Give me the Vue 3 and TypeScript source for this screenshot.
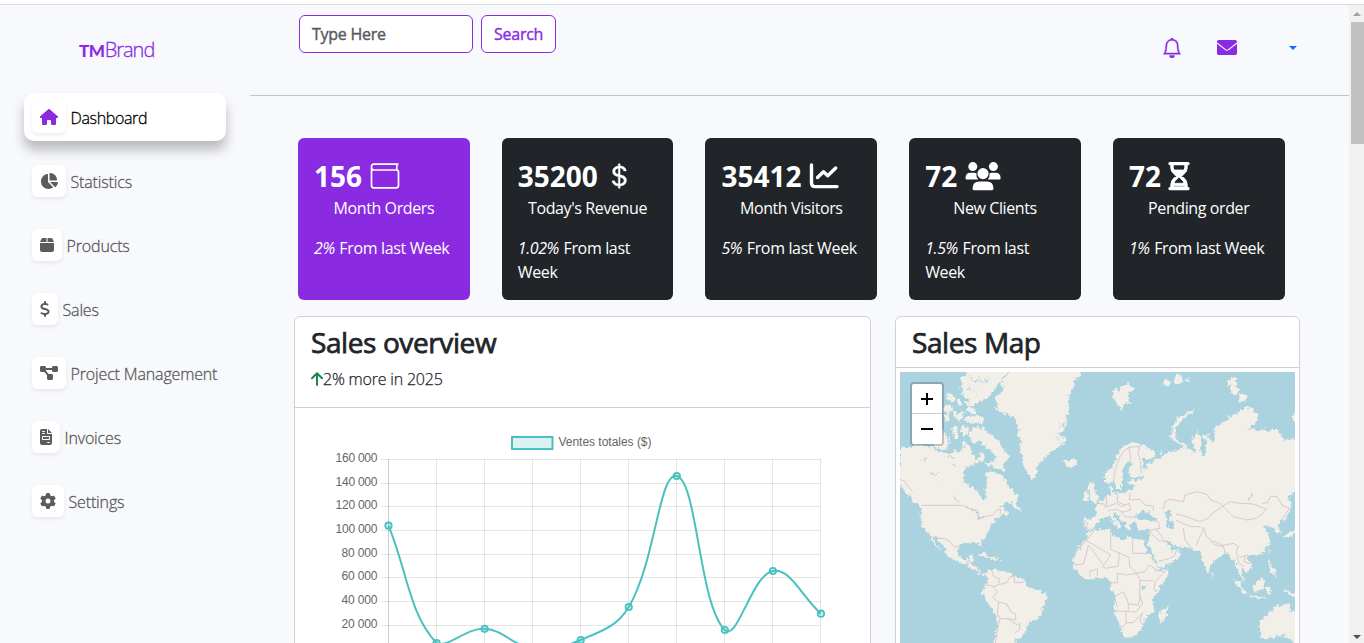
<script setup lang="ts">
interface NavItem { label: string; width: number; box: string; path: string; active?: boolean }
interface Stat { value: string; icon: string; label: string; pct: string }

const nav: NavItem[] = [
  { label: 'Dashboard', width: 18, box: '0 0 576 512', active: true, path: 'M575.8 255.5c0 18-15 32.1-32 32.1l-32 0 .7 160.2c0 2.7-.2 5.4-.5 8.1l0 16.2c0 22.1-17.9 40-40 40l-16 0c-1.1 0-2.2 0-3.3-.1c-1.4 .1-2.8 .1-4.2 .1L416 512l-24 0c-22.1 0-40-17.9-40-40l0-24 0-64c0-17.7-14.3-32-32-32l-64 0c-17.7 0-32 14.3-32 32l0 64 0 24c0 22.1-17.9 40-40 40l-24 0-31.9 0c-1.5 0-3-.1-4.5-.2c-1.2 .1-2.4 .2-3.6 .2l-16 0c-22.1 0-40-17.9-40-40l0-112c0-.9 0-1.9 .1-2.8l0-69.7-32 0c-18 0-32-14-32-32.1c0-9 3-17 10-24L266.4 8c7-7 15-8 22-8s15 2 21 7L564.8 231.5c8 7 12 15 11 24z' },
  { label: 'Statistics', width: 18, box: '0 0 576 512', path: 'M304 240l0-223.4c0-9 7-16.6 16-16.6C443.7 0 544 100.3 544 224c0 9-7.6 16-16.6 16L304 240zM32 272C32 150.7 122.1 50.3 239 34.3c9.2-1.3 17 6.1 17 15.4L256 288 412.5 444.5c6.7 6.7 6.2 17.7-1.5 23.1C371.8 495.6 323.8 512 272 512C139.5 512 32 404.6 32 272zm526.4 16c9.3 0 16.6 7.8 15.4 17c-7.7 55.9-34.6 105.6-73.9 142.3c-6 5.6-15.4 5.2-21.2-.7L320 288l238.4 0z' },
  { label: 'Products', width: 14, box: '0 0 448 512', path: 'M50.7 58.5L0 160l208 0 0-128L93.7 32C75.5 32 58.9 42.3 50.7 58.5zM240 160l208 0L397.3 58.5C389.1 42.3 372.5 32 354.3 32L240 32l0 128zm208 32L0 192 0 416c0 35.3 28.7 64 64 64l320 0c35.3 0 64-28.7 64-64l0-224z' },
  { label: 'Sales', width: 10, box: '0 0 320 512', path: 'M160 0c17.7 0 32 14.3 32 32l0 35.7c1.6 .2 3.1 .4 4.7 .7c.4 .1 .7 .1 1.1 .2l48 8.8c17.4 3.2 28.9 19.9 25.7 37.2s-19.9 28.9-37.2 25.7l-47.5-8.7c-31.3-4.6-58.9-1.5-78.3 6.2s-27.2 18.3-29 28.1c-2 10.7-.5 16.7 1.2 20.4c1.8 3.9 5.5 8.3 12.8 13.2c16.3 10.7 41.3 17.7 73.7 26.3l2.9 .8c28.6 7.6 63.6 16.8 89.6 33.8c14.2 9.3 27.6 21.9 35.9 39.5c8.5 17.9 10.3 37.9 6.4 59.2c-6.9 38-33.1 63.4-65.6 76.7c-13.7 5.6-28.6 9.2-44.4 11l0 33.4c0 17.7-14.3 32-32 32s-32-14.3-32-32l0-34.9c-.4-.1-.9-.1-1.3-.2l-.2 0c-24.4-3.8-64.5-14.3-91.5-26.3c-16.1-7.2-23.4-26.1-16.2-42.2s26.1-23.4 42.2-16.2c20.9 9.3 55.3 18.5 75.2 21.6c31.9 4.7 58.2 2 76-5.3c16.9-6.9 24.6-16.9 26.8-28.9c1.9-10.6 .4-16.7-1.3-20.4c-1.9-4-5.6-8.4-13-13.3c-16.4-10.7-41.5-17.7-74-26.3l-2.8-.7C119.4 279.3 84.4 270 58.4 253c-14.2-9.3-27.5-22-35.8-39.6c-8.4-17.9-10.1-37.9-6.1-59.2C23.7 116 52.3 91.2 84.8 78.3c13.3-5.3 27.9-8.9 43.2-11L128 32c0-17.7 14.3-32 32-32z' },
  { label: 'Project Management', width: 18, box: '0 0 576 512', path: 'M0 80C0 53.5 21.5 32 48 32l96 0c26.5 0 48 21.5 48 48l0 16 192 0 0-16c0-26.5 21.5-48 48-48l96 0c26.5 0 48 21.5 48 48l0 96c0 26.5-21.5 48-48 48l-96 0c-26.5 0-48-21.5-48-48l0-16-192 0 0 16c0 1.7-.1 3.4-.3 5L272 288l96 0c26.5 0 48 21.5 48 48l0 96c0 26.5-21.5 48-48 48l-96 0c-26.5 0-48-21.5-48-48l0-96c0-1.7 .1-3.4 .3-5L144 224l-96 0c-26.5 0-48-21.5-48-48L0 80z' },
  { label: 'Invoices', width: 12, box: '0 0 384 512', path: 'M64 0C28.7 0 0 28.7 0 64L0 448c0 35.3 28.7 64 64 64l256 0c35.3 0 64-28.7 64-64l0-288-128 0c-17.7 0-32-14.3-32-32L224 0 64 0zM256 0l0 128 128 0L256 0zM80 64l64 0c8.8 0 16 7.2 16 16s-7.2 16-16 16L80 96c-8.8 0-16-7.2-16-16s7.2-16 16-16zm0 64l64 0c8.8 0 16 7.2 16 16s-7.2 16-16 16l-64 0c-8.8 0-16-7.2-16-16s7.2-16 16-16zm16 96l192 0c17.7 0 32 14.3 32 32l0 64c0 17.7-14.3 32-32 32L96 352c-17.7 0-32-14.3-32-32l0-64c0-17.7 14.3-32 32-32zm0 32l0 64 192 0 0-64L96 256zM240 416l64 0c8.8 0 16 7.2 16 16s-7.2 16-16 16l-64 0c-8.8 0-16-7.2-16-16s7.2-16 16-16z' },
  { label: 'Settings', width: 16, box: '0 0 512 512', path: 'M495.9 166.6c3.2 8.7 .5 18.4-6.4 24.6l-43.3 39.4c1.1 8.3 1.7 16.8 1.7 25.4s-.6 17.1-1.7 25.4l43.3 39.4c6.9 6.2 9.6 15.9 6.4 24.6c-4.4 11.9-9.7 23.3-15.8 34.3l-4.7 8.1c-6.6 11-14 21.4-22.1 31.2c-5.9 7.2-15.7 9.6-24.5 6.8l-55.7-17.7c-13.4 10.3-28.2 18.9-44 25.4l-12.5 57.1c-2 9.1-9 16.3-18.2 17.8c-13.8 2.3-28 3.5-42.5 3.5s-28.7-1.2-42.5-3.5c-9.2-1.5-16.2-8.7-18.2-17.8l-12.5-57.1c-15.8-6.5-30.6-15.1-44-25.4L83.1 425.9c-8.8 2.8-18.6 .3-24.5-6.8c-8.1-9.8-15.5-20.2-22.1-31.2l-4.7-8.1c-6.1-11-11.4-22.4-15.8-34.3c-3.2-8.7-.5-18.4 6.4-24.6l43.3-39.4C64.6 273.1 64 264.6 64 256s.6-17.1 1.7-25.4L22.4 191.2c-6.9-6.2-9.6-15.9-6.4-24.6c4.4-11.9 9.7-23.3 15.8-34.3l4.7-8.1c6.6-11 14-21.4 22.1-31.2c5.9-7.2 15.7-9.6 24.5-6.8l55.7 17.7c13.4-10.3 28.2-18.9 44-25.4l12.5-57.1c2-9.1 9-16.3 18.2-17.8C227.3 1.2 241.5 0 256 0s28.7 1.2 42.5 3.5c9.2 1.5 16.2 8.7 18.2 17.8l12.5 57.1c15.8 6.5 30.6 15.1 44 25.4l55.7-17.7c8.8-2.8 18.6-.3 24.5 6.8c8.1 9.8 15.5 20.2 22.1 31.2l4.7 8.1c6.1 11 11.4 22.4 15.8 34.3zM256 336a80 80 0 1 0 0-160 80 80 0 1 0 0 160z' },
]

const stats: Stat[] = [
  { value: '156', icon: 'wallet', label: 'Month Orders', pct: '2%' },
  { value: '35200', icon: 'dollar', label: "Today's Revenue", pct: '1.02%' },
  { value: '35412', icon: 'chart', label: 'Month Visitors', pct: '5%' },
  { value: '72', icon: 'users', label: 'New Clients', pct: '1.5%' },
  { value: '72', icon: 'hourglass', label: 'Pending order', pct: '1%' },
]

// Chart geometry, in the svg's own units
const left = 93.5
const top = 51.5
const colW = 48.05
const rowH = 23.65
const bottom = top + 8 * rowH
const ticks = ['160 000', '140 000', '120 000', '100 000', '80 000', '60 000', '40 000', '20 000']
const ys = [117.7, 235, 220.8, 240.5, 232, 199, 68, 222, 163, 205.7]
const points = ys.map((y, i) => ({ x: left + i * colW, y }))

function splinePath(tension: number): string {
  const cap = (v: number) => Math.max(top, Math.min(bottom, v))
  const ctl = points.map((p, i) => {
    const a = points[i - 1] ?? p
    const b = points[i + 1] ?? p
    const d1 = Math.hypot(p.x - a.x, p.y - a.y)
    const d2 = Math.hypot(b.x - p.x, b.y - p.y)
    const f1 = (tension * d1) / (d1 + d2)
    const f2 = (tension * d2) / (d1 + d2)
    return {
      px: p.x - f1 * (b.x - a.x), py: cap(p.y - f1 * (b.y - a.y)),
      nx: p.x + f2 * (b.x - a.x), ny: cap(p.y + f2 * (b.y - a.y)),
    }
  })
  return points.map((p, i) => i === 0
    ? `M${p.x} ${p.y}`
    : `C${ctl[i - 1].nx} ${ctl[i - 1].ny} ${ctl[i].px} ${ctl[i].py} ${p.x} ${p.y}`).join('')
}
const curve = splinePath(0.4)

// Land outlines: Americas first, then the eastern half in its own offset group
const westLand = [
  '30,415 40,412 52,416 62,410 80,404 100,408 120,408 135,418 150,425 165,428 180,430 195,420 215,427 225,412 235,402 242,415 245,432 252,440 268,450 262,460 240,468 228,475 218,490 222,512 238,528 258,540 270,548 275,568 282,572 288,560 285,545 292,530 290,505 288,490 295,482 312,485 320,495 332,490 345,508 350,520 360,535 375,545 384,562 375,572 360,578 342,580 325,592 340,590 340,600 352,604 360,610 345,616 330,616 322,628 308,640 300,650 298,662 290,675 278,688 273,695 278,716 272,712 266,697 250,698 235,700 220,698 208,705 203,718 205,735 215,747 232,748 238,738 250,735 248,750 245,762 262,768 264,778 270,790 280,795 290,793 290,799 280,798 270,792 255,780 240,770 225,763 210,758 190,748 172,738 165,718 150,700 138,683 128,678 135,695 148,712 156,726 145,718 133,702 125,688 118,675 108,665 98,650 92,635 92,610 95,595 85,585 72,578 65,565 50,552 40,540 30,525',
  '288,796 300,780 312,776 325,784 345,784 362,788 372,797 385,802 400,806 408,818 408,828 425,835 445,840 465,850 473,860 465,875 458,890 455,910 445,926 425,932 412,945 408,960 395,980 385,988 374,985 380,1010 310,1010 318,975 322,945 322,920 310,903 295,885 285,865 275,850 280,835 290,820 294,805',
  '312,265 325,255 345,235 335,228 328,222 338,210 352,198 362,180 574,180 568,200 548,215 555,228 540,245 540,265 533,285 540,300 530,320 530,345 515,365 500,375 522,380 528,395 515,405 500,415 485,425 465,445 450,458 440,475 438,495 432,507 420,500 408,485 400,465 395,445 392,425 388,400 398,395 385,380 385,355 380,335 372,320 350,312 330,308 315,295 325,285',
  '515,452 530,448 545,447 560,450 562,460 550,470 537,474 525,468 530,460',
  '212,205 225,192 235,180 355,180 340,205 325,220 315,235 305,255 290,268 270,275 250,285 235,288 222,278 240,270 225,260 212,250 220,240 208,230 220,220',
  '226,320 240,316 260,320 280,322 281,338 260,338 240,338 226,332', '232,290 250,296 262,308 258,318 242,310 228,305',
  '172,250 185,252 196,268 185,278 174,266', '165,285 180,285 190,300 178,310 160,300', '200,265 210,268 215,285 203,282', '190,305 200,312 218,302 222,325 208,335 195,325', '161,315 175,312 178,330 165,335',
  '95,380 110,370 125,372 145,358 158,362 175,380 180,400 172,415 155,418 135,412 120,400 100,396',
  '185,352 200,350 208,368 205,388 190,380', '218,345 235,350 236,365 220,385 212,365', '212,395 225,390 230,405 218,410',
  '238,385 240,362 252,352 270,352 290,358 300,372 318,385 330,402 340,420 358,440 350,455 340,462 348,485 330,480 315,470 300,468 288,458 310,455 318,440 305,425 290,412 278,405 266,390 256,402 245,395',
  '268,430 282,430 285,445 275,460 265,448', '365,575 378,568 380,585 394,598 384,600 370,592 372,580', '258,730 280,728 298,738 304,746 284,740 268,735', '303,742 325,742 326,749 305,750', '330,747 340,747 340,751 330,751',
  '580,550 592,542 597,555 592,570 580,572', '598,520 610,514 612,535 622,550 628,570 605,577 600,560 604,545 596,535',
]
const eastLand = [
  '-15,625 -18,640 -15,655 -5,660 5,655 15,650 20,640 32,630 45,622 55,618 65,630 78,645 88,655 92,645 80,630 68,615 76,608 88,620 100,635 108,650 115,662 125,655 120,640 130,635 138,632 135,645 142,655 160,662 175,658 180,672 175,690 167,698 178,710 190,735 200,755 210,773 230,765 250,755 265,745 276,730 262,718 245,724 240,708 226,695 235,690 250,705 270,712 290,715 305,715 320,722 330,725 338,750 345,775 353,793 362,780 360,765 385,745 395,735 410,730 420,745 435,755 442,770 445,790 455,805 463,818 460,800 455,785 450,775 462,775 470,788 480,780 487,770 480,755 470,742 480,735 500,738 515,730 530,715 540,690 535,670 522,655 530,645 545,650 552,655 562,672 573,665 562,645 575,632 590,620 600,600 605,580 595,560 620,540 620,388 600,390 585,388 570,370 550,357 535,362 520,358 500,360 475,355 500,335 505,315 490,300 470,288 455,300 435,315 410,328 390,345 368,355 375,375 372,400 360,385 350,374 338,378 348,395 350,425 340,435 332,425 335,395 325,365 312,375 307,400 318,425 300,418 280,410 260,422 240,425 220,435 210,445 198,448 192,455 172,460 168,480 160,470 158,445 175,448 190,445 198,430 180,415 155,405 140,396 120,400 105,405 90,418 80,440 65,470 45,490 45,515 60,522 72,515 80,535 92,540 98,520 95,500 100,475 118,452 128,460 115,480 115,500 135,503 155,497 150,508 130,510 112,520 128,525 128,537 110,540 108,548 85,550 65,550 68,535 62,525 55,535 60,552 40,568 30,575 15,590 20,605 15,622 -5,625',
  '-5,665 20,658 60,658 65,678 85,685 103,692 108,680 130,685 165,690 160,700 175,725 188,750 203,770 208,780 240,778 232,800 215,825 195,850 188,870 192,895 190,905 170,920 165,935 158,950 145,970 125,982 105,985 95,965 85,935 72,905 78,875 75,855 60,835 65,815 50,803 30,803 -10,808 -25,800 -48,775 -50,765 -45,735 -30,705 -10,690',
  '-1,516 8,520 14,540 27,565 20,575 0,577', '208,930 206,915 214,902 228,892 235,882 233,905 220,937 210,940', '507,930 530,915 550,900 560,885 575,892 580,880 602,880 598,898 620,905 620,1010 600,985 580,975 545,985 515,985 510,960',
  '430,805 442,812 460,832 472,850 460,852 445,832', '487,825 500,820 515,805 525,810 520,838 500,845 490,838', '470,855 490,858 515,860 535,866 515,866 480,860', '528,832 548,828 535,838 548,848 530,850', '535,750 542,752 545,770 558,780 555,800 545,795 540,775', '580,835 600,845 620,850 620,865 600,855 580,845', '575,683 595,668 620,660 620,670 600,678 580,686', '533,720 539,718 536,732', '362,785 370,795 365,803',
  '68,240 80,235 90,245 95,230 115,222 137,235 125,245 112,250 123,285 108,275 95,302 85,285 70,265',
  '240,380 248,350 260,325 290,308 314,298 310,308 285,322 268,340 256,358 258,385 285,402 292,416 268,402 248,392', '415,215 425,200 437,210 440,230 448,245 438,256 424,245', '450,248 468,255 470,272 448,275', '216,215 235,210 240,225 222,228', '255,200 270,190 280,210 268,225 250,218', '285,210 299,205 296,218', '205,425 215,425 213,435', '606,318 620,310 620,338 610,332',
]
const water = [
  '150,608 158,602 168,608 180,600 178,612 192,622 198,628 190,634 165,628 145,632 138,625', '225,608 240,600 247,606 235,622 248,640 252,658 235,655 228,635', '155,830 168,828 165,838 156,840', '468,570 480,560 490,542 488,556 476,568', '148,508 156,500 162,505 154,512',
]
const westBorders = [
  '95,586 215,586 235,592', '262,628 290,618 308,616 322,600 332,598 330,614', '120,680 140,684 165,686 180,694 190,708 205,712', '30,508 45,515 55,530 68,545', '228,762 236,750 248,766 262,770', '305,780 312,800 328,806 326,824 310,830 298,825 282,826', '326,824 350,818 360,800 372,800 374,818 402,816', '310,830 322,846 308,862 326,876 350,882 362,905 376,912 378,930 352,926 330,926 322,910 326,876', '330,926 322,960 316,1000', '352,926 382,945 390,940 388,960 374,968', '585,630 592,640 588,658', '235,594 258,603 268,624',
]
const eastBorders = [
  '70,520 75,480 90,440 105,420 118,412 122,448', '118,412 138,410 150,410 144,430 152,455 154,490', '48,555 50,590 80,580 95,590 118,580 122,600 100,606 78,598 52,602', '20,580 42,582 48,595', '82,552 82,575 105,585', '120,548 118,570 150,568 165,585 190,588 190,602', '95,605 105,620 132,622 140,610', '220,598 225,575 240,568 280,575 285,555 320,545 350,552 362,570 385,578 398,588 365,612 355,625 330,635 310,628 285,618 258,612', '258,630 278,640 302,650 330,650 340,660 325,690 318,708', '398,588 420,575 450,580 490,582 530,598 500,625 470,630 430,620 398,588', '515,580 532,578 542,558 562,560 575,585 598,595 585,615 572,635', '340,650 350,680 365,692 400,706 430,700 445,708 438,730 450,742 475,735', '365,695 372,704 400,710', '400,708 405,728 415,730', '280,655 285,690 305,715', '172,690 185,660 210,655 205,635 190,632', '185,672 205,690 225,695', '200,660 215,680 228,698', '205,754 240,745 255,735 258,722', '128,686 128,730 174,730', '62,662 62,718 118,742', '88,728 84,768 48,775 38,770 62,735 -10,692', '-45,730 -10,690 14,660', '-48,765 -20,762 -12,735 -5,705 38,762', '118,742 118,768 140,790 165,785 178,765 200,780', '0,800 0,782 22,778 22,798', '62,818 82,818 82,790 108,795 140,790 152,812 190,812', '195,782 225,785 195,815 192,840', '78,858 100,845 112,870 115,882 145,885 152,855', '72,902 138,906 158,880 148,855 150,830 150,810', '115,882 115,902', '108,908 108,940 95,955', '108,938 130,938 158,908', '158,908 150,932 158,945', '440,740 448,760 462,770', '465,735 462,755 480,762',
]
</script>

<template>
  <div class="page">
    <aside class="sidebar">
      <div class="brand"><b>TM</b><span>Brand</span></div>
      <nav>
        <a v-for="n in nav" :key="n.label" class="nav-item" :class="{ active: n.active }">
          <span class="nav-icon"><svg :width="n.width" height="16" :viewBox="n.box"><path :d="n.path" /></svg></span>
          <span class="nav-label">{{ n.label }}</span>
        </a>
      </nav>
    </aside>

    <main>
      <header>
        <form class="search">
          <div class="input">Type Here</div>
          <button type="button">Search</button>
        </form>
        <div class="actions">
          <svg class="bell" width="20" height="20" viewBox="0 0 16 16"><path d="M8 16a2 2 0 0 0 2-2H6a2 2 0 0 0 2 2M8 1.918l-.797.161A4 4 0 0 0 4 6c0 .628-.134 2.197-.459 3.742-.16.767-.376 1.566-.663 2.258h10.244c-.287-.692-.502-1.49-.663-2.258C12.134 8.197 12 6.628 12 6a4 4 0 0 0-3.203-3.92zM14.22 12c.223.447.481.801.78 1H1c.299-.199.557-.553.78-1C2.68 10.2 3 6.88 3 6c0-2.42 1.72-4.44 4.005-4.901a1 1 0 1 1 1.99 0A5 5 0 0 1 13 6c0 .88.32 4.2 1.22 6" /></svg>
          <svg class="mail" width="20" height="15" viewBox="0 0 20 15"><rect width="20" height="15" rx="1.7" /><path d="M0 2.9 8.4 9.6Q10 10.9 11.6 9.6L20 2.9" fill="none" stroke="#f8f9fc" stroke-width="1.2" /></svg>
          <svg class="caret" width="8" height="4" viewBox="0 0 8 4"><path d="M0 0h8L4 4z" /></svg>
        </div>
      </header>

      <section class="stats">
        <article v-for="(s, i) in stats" :key="s.label" class="stat" :class="{ primary: i === 0 }">
          <div class="figure">
            <strong>{{ s.value }}</strong>
            <svg v-if="s.icon === 'wallet'" class="ic" width="30" height="28" viewBox="0 0 30 28" fill="none" stroke="#fff" stroke-width="1.7"><path d="M28.5 2.2H3.8Q1.5 2.2 1.5 4.5v19Q1.5 25.8 3.8 25.8h22.4q2.3 0 2.3-2.3V10Q28.500 8 26.300 8H4Q1.500 8 1.500 5.400M26.800 2.500V8" /></svg>
            <svg v-else-if="s.icon === 'dollar'" class="ic" width="28" height="28" viewBox="0 0 16 16" fill="#fff" stroke="#fff" stroke-width=".2"><path d="M4 10.781c.148 1.667 1.513 2.85 3.591 3.003V15h1.043v-1.216c2.27-.179 3.678-1.438 3.678-3.3 0-1.59-.947-2.51-2.956-3.028l-.722-.187V3.467c1.122.11 1.879.714 2.07 1.616h1.47c-.166-1.6-1.54-2.748-3.54-2.875V1H7.591v1.233c-1.939.23-3.27 1.472-3.27 3.156 0 1.454.966 2.483 2.661 2.917l.61.162v4.031c-1.149-.17-1.94-.8-2.131-1.718zm3.391-3.836c-1.043-.263-1.6-.825-1.6-1.616 0-.944.704-1.641 1.8-1.828v3.495l-.2-.05zm1.591 1.872c1.287.323 1.852.859 1.852 1.769 0 1.097-.826 1.828-2.2 1.939V8.73z" /></svg>
            <svg v-else-if="s.icon === 'chart'" class="ic" width="30" height="28" viewBox="0 0 30 28" fill="none" stroke="#fff" stroke-width="3.4" stroke-linecap="round" stroke-linejoin="round"><path d="M2.5 3v18q0 3.6 3.6 3.6H28M8.5 15.5l6-5.8 4.2 4L26.7 6" /></svg>
            <svg v-else-if="s.icon === 'users'" class="ic" width="36" height="30" viewBox="0 0 36 30" fill="#fff"><circle cx="7.8" cy="5.6" r="4.5" /><circle cx="28.4" cy="5.6" r="4.5" /><circle cx="18" cy="12.6" r="5.6" /><path d="M5.4 11.8h4.2q1 0 1.8.4-.5 3.6 1.9 6.3H1.6Q.5 18.5.5 17.3q0-5.5 4.9-5.5M26.4 11.8h4.2q5 0 5 5.5 0 1.2-1.2 1.2H22.7q2.4-2.7 1.9-6.3.8-.4 1.8-.4M14.3 20.5h7.4q6.8 0 6.8 7.1 0 1.6-1.5 1.6H9q-1.5 0-1.5-1.6 0-7.1 6.8-7.1" /></svg>
            <svg v-else class="ic" width="22" height="30" viewBox="0 0 22 30" fill="none" stroke="#fff" stroke-linejoin="round" stroke-linecap="round"><path d="M2 2.6h18M2 27.6h18" stroke-width="3.4" /><path d="M4 3v3.5q0 2.6 2 4.5l4 4-4 4q-2 2-2 4.5V27h14v-3.5q0-2.5-2-4.5l-4-4 4-4q2-1.900 2-4.500V3" stroke-width="3.4" /><path d="M5 9h12l-6 6zM5.5 24.5h11V21l-1.8 1.300H7.300L5.500 21z" fill="#fff" stroke-width=".8" /></svg>
          </div>
          <div class="stat-label">{{ s.label }}</div>
          <p><em>{{ s.pct }}</em> From last Week</p>
        </article>
      </section>

      <section class="panels">
        <article class="panel sales">
          <div class="panel-head tall">
            <h3>Sales overview</h3>
            <p><svg width="12" height="14" viewBox="0 0 12 14" fill="none" stroke="#198754" stroke-width="2" stroke-linecap="round" stroke-linejoin="round"><path d="M6 13V1.500M1 6.300 6 1.200l5 5.100" /></svg>2% more in 2025</p>
          </div>
          <svg class="chart" width="575" height="235" viewBox="0 0 575 235">
            <rect x="217" y="29" width="40.5" height="12" fill="#dbf2f2" stroke="#4bc0c0" stroke-width="2" />
            <text x="263.5" y="38" textLength="93" lengthAdjust="spacing">Ventes totales ($)</text>
            <g v-for="(t, i) in ticks" :key="t">
              <path :d="`M86 ${Math.floor(top + i * rowH) + 0.5}H526`" class="grid" />
              <text x="82.5" :y="54 + i * rowH" text-anchor="end" :textLength="t.length === 7 ? 42 : 36">{{ t }}</text>
            </g>
            <path v-for="i in 10" :key="i" :d="`M${Math.floor(left + (i - 1) * colW) + 0.5} 51V235`" class="grid" :class="{ axis: i === 1 }" />
            <path :d="curve" fill="none" stroke="#4bc0c0" stroke-width="2" />
            <circle v-for="p in points" :key="p.x" :cx="p.x" :cy="p.y" r="3.2" fill="#4bc0c0" fill-opacity=".2" stroke="#4bc0c0" stroke-width="1.8" />
          </svg>
        </article>

        <article class="panel map-panel">
          <div class="panel-head"><h3>Sales Map</h3></div>
          <div class="map">
            <svg width="395" height="271" viewBox="30 186 1185 813">
              <defs>
                <filter id="coast" x="-5%" y="-5%" width="110%" height="110%" color-interpolation-filters="sRGB">
                  <feTurbulence type="fractalNoise" baseFrequency="0.09" numOctaves="3" seed="4" result="n" />
                  <feDisplacementMap in="SourceGraphic" in2="n" scale="20" xChannelSelector="R" yChannelSelector="G" />
                </filter>
              </defs>
              <g filter="url(#coast)">
                <polygon v-for="(p, i) in westLand" :key="'w' + i" :points="p" class="land" />
                <g transform="translate(600 0)">
                  <polygon v-for="(p, i) in eastLand" :key="'e' + i" :points="p" class="land" />
                  <polygon v-for="(p, i) in water" :key="'s' + i" :points="p" class="sea" />
                </g>
                <path class="inlets" d="M90 452l14-8 8 4-10 8M122 488l14 6 12-7M190 458l6 14M150 514l10 4M175 440l15 4M192 556l6 16 10 6M232 592l14 8 12-4 8 10M262 604l4 22 16-4M238 196l14 18 16 2M265 196l10 22 20-8M225 235l24 4 10 14M400 480l6-12M408 495l10-14M515 400l-14-18M530 340l-22 8M545 250l-14 8" />
              </g>
              <polyline v-for="(p, i) in westBorders" :key="'wb' + i" :points="p" class="border" />
              <g transform="translate(600 0)"><polyline v-for="(p, i) in eastBorders" :key="'eb' + i" :points="p" class="border" /></g>
            </svg>
            <div class="zoom">
              <span><svg width="12" height="12" viewBox="0 0 12 12"><path d="M0 6h12M6 0v12" /></svg></span>
              <span><svg width="12" height="12" viewBox="0 0 12 12"><path d="M0 6h12" /></svg></span>
            </div>
          </div>
        </article>
      </section>
    </main>

    <div class="scrollbar">
      <svg width="8" height="4" viewBox="0 0 8 4"><path d="M0 4h8L4 0z" fill="#a3a3a3" /></svg>
      <div class="thumb"></div>
      <svg class="down" width="8" height="4" viewBox="0 0 8 4"><path d="M0 0h8L4 4z" fill="#505050" /></svg>
    </div>
  </div>
</template>

<style>
body { margin: 0; background: #fff; overflow: hidden; }
</style>

<style scoped>
* { box-sizing: border-box; }
svg { display: block; flex: none; }
.page { display: flex; height: 639px; margin-top: 4px; border-top: 1px solid #ddd; overflow: hidden; background: #f8f9fc; color: #212529; font: 16px/24px "Open Sans", "Noto Sans", sans-serif; letter-spacing: -.35px; }
.sidebar { width: 250px; flex: none; padding: 0 24px; }
.brand { height: 88px; padding: 29px 0 0 55px; display: flex; align-items: baseline; color: #8a2be2; font-size: 20px; line-height: 32px; font-weight: 300; }
.brand b { font: 900 17px/32px Lato, sans-serif; letter-spacing: -.4px; }
.brand span { letter-spacing: -1px; -webkit-text-stroke: .3px; }
nav { display: flex; flex-direction: column; gap: 16px; }
.nav-item { height: 48px; display: flex; align-items: center; padding: 0 8px; gap: 4.5px; border-radius: 10px; color: #5a5a5a; font-weight: 300; white-space: nowrap; letter-spacing: -.15px; }
.nav-label { padding-top: 1px; -webkit-text-stroke: .3px; }
.nav-item.active { background: #fff; color: #000; letter-spacing: -.35px; box-shadow: 0 9px 12px rgba(0, 0, 0, .25); }
.nav-icon { background: #fff; padding: 8px; height: 32px; border-radius: 6px; box-shadow: 0 2px 4px rgba(0, 0, 0, .075); fill: #5c5c5c; }
.active .nav-icon { fill: #8a2be2; }
main { flex: 1; min-width: 0; }
header { height: 91px; border-bottom: 1px solid #c3c4c7; padding: 10px 52px 0 49px; display: flex; justify-content: space-between; }
.search { display: flex; gap: 8px; }
.input, .search button { height: 38px; border: 1px solid #8a2be2; border-radius: 6px; background: #fff; padding: 6px 12px; font-family: inherit; font-size: 16px; line-height: 24px; -webkit-text-stroke: .4px; letter-spacing: -.25px; }
.input { width: 174px; color: #555a5f; }
.search button { width: 75px; color: #8a2be2; text-align: center; }
.actions { display: flex; height: 65px; align-items: center; fill: #8a2be2; }
.bell { stroke: #8a2be2; stroke-width: .35; }
.mail { margin: 0 52px 0 35px; }
.caret { fill: #0d6efd; }
.stats { margin: 42px 0 0 48px; width: 986.5px; display: grid; grid-template-columns: repeat(5, 1fr); gap: 32.1px; }
.stat { height: 162px; border-radius: 6px; background: #212529; color: #fff; padding: 20px 16px 0; }
.stat.primary { background: #8a2be2; }
.figure { display: flex; align-items: center; height: 35px; }
.figure strong { font-size: 28px; line-height: 34px; letter-spacing: 0; }
.ic { margin-left: 7.5px; }
.stat-label { text-align: center; margin-top: 3px; white-space: nowrap; letter-spacing: -.4px; }
.stat p { margin: 16px -8px 0 0; padding-right: 8px; }
.stat em { letter-spacing: -.4px; margin-right: .8px; }
.panels { display: flex; gap: 24px; margin: 16px 0 0 44px; }
.panel { height: 400px; background: #fff; border: 1px solid #d0d1d3; border-radius: 6px; }
.sales { width: 577px; }
.map-panel { width: 405px; }
.panel-head { height: 51px; border-bottom: 1px solid #d0d1d3; padding: 8px 16px 0; }
.panel-head.tall { height: 91px; }
h3 { margin: 0; font-size: 28px; line-height: 34px; font-weight: 400; letter-spacing: -.4px; -webkit-text-stroke: .75px; }
.panel-head p { margin: 8px 0 0; display: flex; align-items: center; font-weight: 300; letter-spacing: -.2px; -webkit-text-stroke: .25px; }
.chart text { font: 12px "Liberation Sans", Arial, sans-serif; letter-spacing: 0; fill: #666; }
.grid { stroke: rgba(0, 0, 0, .1); fill: none; }
.axis { stroke: rgba(0, 0, 0, .2); }
.map { margin: 4px; height: 271px; background: #aad3df; position: relative; }
.land { fill: #f2efe9; }
.sea { fill: #aad3df; }
.inlets { fill: none; stroke: #aad3df; stroke-width: 3; }
.border { fill: none; stroke: #cfb9c9; stroke-width: 2.2; }
.zoom { position: absolute; left: 10px; top: 10px; width: 34px; border: 2px solid rgba(0, 0, 0, .2); background-clip: padding-box; border-radius: 4px; }
.zoom span { height: 30px; background: #fff; display: grid; place-items: center; border-radius: 0 0 2px 2px; }
.zoom span:first-child { height: 30px; border-bottom: 1px solid #ccc; border-radius: 2px 2px 0 0; }
.zoom path { stroke: #000; stroke-width: 2; }
.scrollbar { width: 15px; flex: none; background: #f1f1f1; display: flex; flex-direction: column; align-items: center; padding: 7px 0 4px; }
.thumb { width: 13px; height: 122px; margin: 6px 0 0 2px; background: #c1c1c1; }
.down { margin-top: auto; }
</style>
